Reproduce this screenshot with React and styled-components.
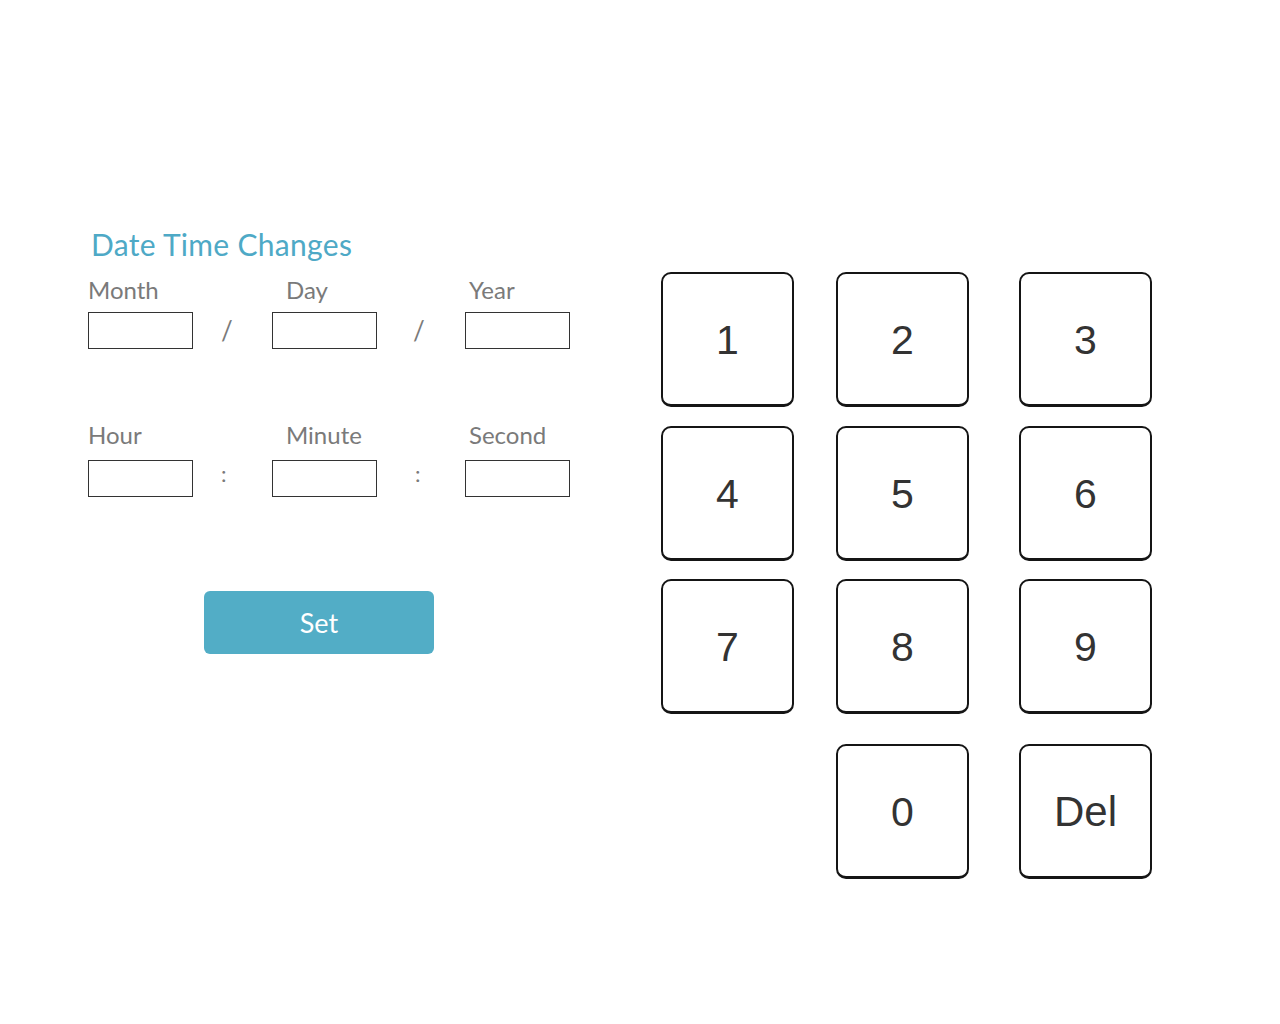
import React from 'react';
import styled, { createGlobalStyle } from 'styled-components';

const GlobalStyle = createGlobalStyle`
  html, body {
    margin: 0;
    padding: 0;
    background: #ffffff;
  }
  body {
    font-family: Lato, "Open Sans", sans-serif;
  }
`;

const Page = styled.div`
  width: 1280px;
  height: 1024px;
  display: flex;
  align-items: flex-start;
`;

const FormPanel = styled.div`
  margin-left: 88px;
  padding-top: 226px;
  width: 482px;
  display: flex;
  flex-direction: column;
`;

const Title = styled.h1`
  margin: 0 0 0 3px;
  font-size: 30px;
  line-height: 36px;
  font-weight: 400;
  color: #4ea9c6;
  letter-spacing: 0.3px;
`;

const FieldRow = styled.div`
  display: grid;
  grid-template-columns: 105px 79px 105px 88px 105px;
  margin-top: ${p => p.gap}px;
`;

const Field = styled.div`
  display: flex;
  flex-direction: column;
`;

const Label = styled.span`
  padding-left: ${p => p.indent || 0}px;
  font-size: 24px;
  line-height: 28px;
  height: 28px;
  margin-bottom: ${p => p.space || 8}px;
  color: #7a7a7a;
  white-space: nowrap;
`;

const Input = styled.div`
  box-sizing: border-box;
  width: 105px;
  height: 37px;
  border: 1px solid #333333;
  background: #ffffff;
`;

const Separator = styled.span`
  align-self: end;
  height: 37px;
  line-height: ${p => p.lh}px;
  padding-left: ${p => p.offset}px;
  font-size: ${p => p.size}px;
  color: #7a7a7a;
`;

const SetButton = styled.button`
  margin: 94px 0 0 116px;
  width: 230px;
  height: 63px;
  border: none;
  border-radius: 6px;
  background: #52adc6;
  color: #ffffff;
  font-family: Lato, "Open Sans", sans-serif;
  font-size: 27px;
  cursor: pointer;
`;

const Keypad = styled.div`
  margin-left: 91px;
  margin-top: 272px;
  display: grid;
  grid-template-columns: 175px 183px 133px;
  grid-template-rows: 154px 153px 165px 135px;
  justify-items: start;
  align-items: start;
`;

const Key = styled.button`
  grid-column: ${p => p.col};
  box-sizing: border-box;
  width: 133px;
  height: 135px;
  border: 2px solid #151515;
  border-bottom-width: 3px;
  border-radius: 10px;
  background: #ffffff;
  color: #333333;
  font-family: "Liberation Sans", Arial, sans-serif;
  font-size: ${p => (p.wide ? 42 : 41)}px;
  padding: 2px 0 0;
  cursor: pointer;
`;

const keys = [
  { label: '1' }, { label: '2' }, { label: '3' },
  { label: '4' }, { label: '5' }, { label: '6' },
  { label: '7' }, { label: '8' }, { label: '9' },
  { label: '0', col: 2 }, { label: 'Del' },
];

export default function App() {
  return (
    <Page>
      <GlobalStyle />
      <FormPanel>
        <Title>Date Time Changes</Title>
        <FieldRow gap={14}>
          <Field><Label>Month</Label><Input /></Field>
          <Separator offset={28} size={26} lh={37}>/</Separator>
          <Field><Label indent={14}>Day</Label><Input /></Field>
          <Separator offset={36} size={26} lh={37}>/</Separator>
          <Field><Label indent={4}>Year</Label><Input /></Field>
        </FieldRow>
        <FieldRow gap={72}>
          <Field><Label space={11}>Hour</Label><Input /></Field>
          <Separator offset={28} size={22} lh={28}>:</Separator>
          <Field><Label indent={14} space={11}>Minute</Label><Input /></Field>
          <Separator offset={38} size={22} lh={28}>:</Separator>
          <Field><Label indent={4} space={11}>Second</Label><Input /></Field>
        </FieldRow>
        <SetButton>Set</SetButton>
      </FormPanel>
      <Keypad>
        {keys.map(k => (
          <Key key={k.label} col={k.col} wide={k.label === 'Del'}>{k.label}</Key>
        ))}
      </Keypad>
    </Page>
  );
}
